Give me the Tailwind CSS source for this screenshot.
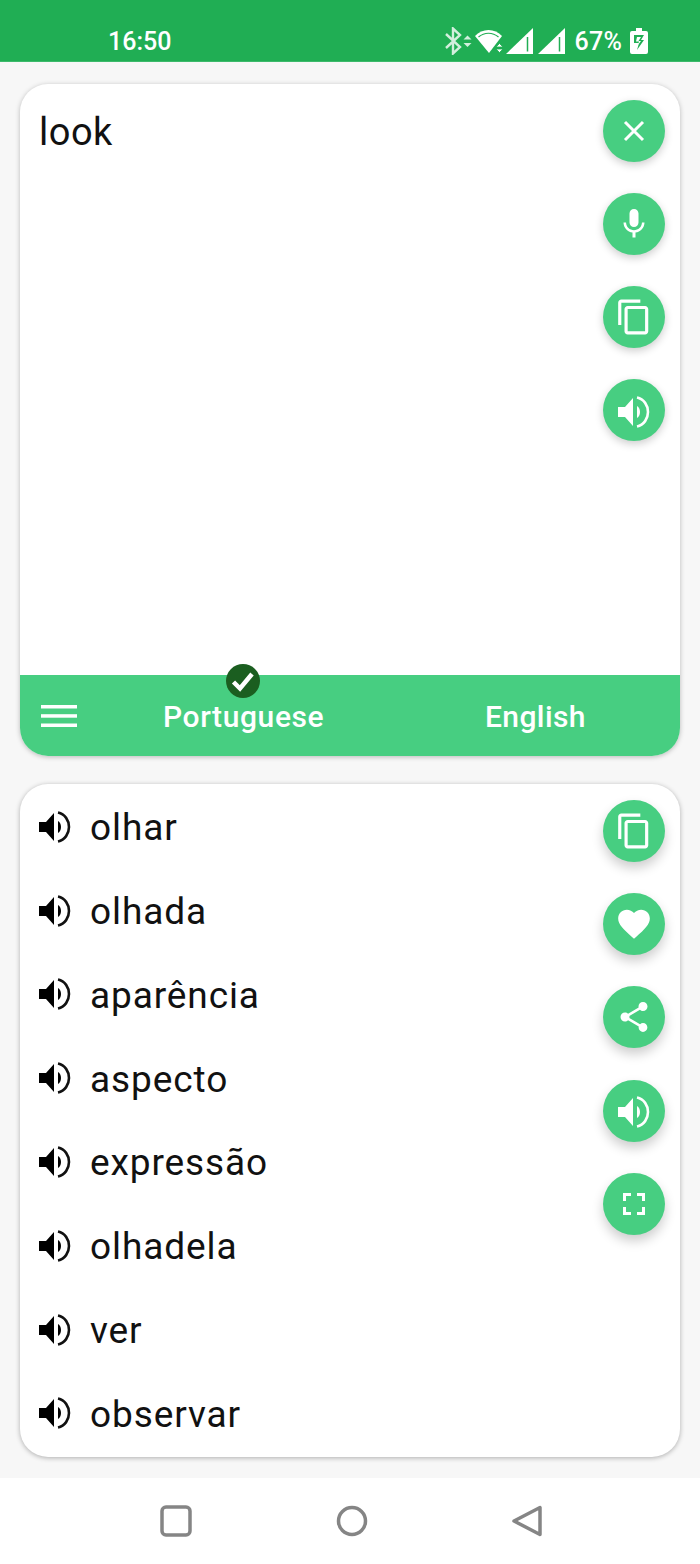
<!DOCTYPE html>
<html lang="pt">
<head>
    <meta charset="UTF-8">
    <meta name="viewport" content="width=device-width, initial-scale=1.0">
    <title>Translator</title>
    <script src="https://cdn.jsdelivr.net/npm/@tailwindcss/browser@4"></script>
</head>
<body class="bg-[#f7f7f7] font-['Roboto',sans-serif]">

<!-- Shared icons -->
<svg width="0" height="0" class="absolute">
    <symbol id="speaker" viewBox="0 0 34 34">
        <path d="M1 12h7l8-9v28l-8-9H1z"/>
        <path d="M20 11c2 1 3 3.5 3 6s-1 5-3 6z"/>
        <path d="M20 2.5c7 1.5 11 8 11 14.5s-4 13-11 14.5" fill="none" stroke="currentColor" stroke-width="2.6"/>
    </symbol>
    <symbol id="copy" viewBox="0 0 24 24">
        <path d="M16 1H4c-1.1 0-2 .9-2 2v14h2V3h12V1zm3 4H8c-1.1 0-2 .9-2 2v14c0 1.1.9 2 2 2h11c1.1 0 2-.9 2-2V7c0-1.1-.9-2-2-2zm0 16H8V7h11v14z"/>
    </symbol>
    <symbol id="signal" viewBox="0 0 27 26">
        <path d="M0 26L27 0v26z" fill="white"/>
        <path d="M21.5 9v14.5" stroke="#20ae54" stroke-width="1.5"/>
    </symbol>
</svg>

<div class="w-[700px] h-[1564px] flex flex-col overflow-hidden">

    <!-- Status bar -->
    <header class="h-[62px] bg-[#20ae54] text-white shrink-0 border-b border-b-[#3dba6b]">
        <div class="flex items-center h-[26px] mt-[28px] pl-[108px] pr-[52px] justify-between">
            <span class="text-[25px] font-medium leading-none mt-[1px]">16:50</span>
            <div class="flex items-center">
                <svg width="28" height="28" viewBox="0 0 28 28" fill="none" stroke="white" stroke-opacity="0.8" stroke-width="2.4"><path d="M2 7l14 13-7 6.5v-25L16 8 2 21"/><path d="M19.5 12.5l4-4 4 4zM19.5 16l4 4 4-4z" fill="white" fill-opacity="0.8" stroke="none"/></svg>
                <svg width="30" height="26" viewBox="0 0 30 26" class="ml-[2px]"><path d="M1 8C8 0 21 0 28 8L15 25z" fill="white"/><path d="M4.5 9c6-5 14-5 20 0" stroke="#20ae54" stroke-width="1.2" fill="none"/><path d="M22 19l3.5-3.5 3.5 3.5zM22 21l3.5 3.5 3.5-3.5z" fill="white" stroke="#20ae54" stroke-width="0.8"/></svg>
                <svg width="27" height="26" class="ml-[2px]"><use href="#signal"/></svg>
                <svg width="27" height="26" class="ml-[5px]"><use href="#signal"/></svg>
                <span class="text-[25px] font-medium leading-none ml-[10px] mt-[1px] tracking-[0.2px]">67%</span>
                <svg width="18" height="26" viewBox="0 0 18 26" class="ml-[8px]"><path d="M6 0h6v3h4a2 2 0 0 1 2 2v19a2 2 0 0 1-2 2H2a2 2 0 0 1-2-2V5a2 2 0 0 1 2-2h4z" fill="white"/><path d="M4 7h10l-3 5h3l-7 10 2-7H4z" fill="#20ae54"/><path d="M7 9h4l-2.500 4H11l-3 4 1-3.500H6z" fill="white"/></svg>
            </div>
        </div>
    </header>

    <main class="flex-1 px-[20px] pt-[22px] flex flex-col gap-[28px]">

        <!-- Input card -->
        <section class="relative h-[672px] bg-white rounded-[28px] shadow-[0_1px_5px_rgba(0,0,0,0.25)] flex flex-col">
            <div class="flex-1 pl-[19px] pt-[25px] text-[38px] leading-[46px] tracking-[0.5px] text-[#111]">look</div>

            <div class="absolute right-[15px] top-[16px] flex flex-col gap-[31px]">
                <button class="w-[62px] h-[62px] rounded-full bg-[#47ce81] shadow-[0_3px_8px_rgba(0,0,0,0.2)] flex items-center justify-center">
                    <svg width="36" height="36" viewBox="0 0 24 24" fill="none" stroke="white" stroke-width="2"><path d="M6 6l12 12M18 6L6 18"/></svg>
                </button>
                <button class="w-[62px] h-[62px] rounded-full bg-[#47ce81] shadow-[0_3px_8px_rgba(0,0,0,0.2)] flex items-center justify-center">
                    <svg width="36" height="36" viewBox="0 0 24 24" fill="white"><path d="M12 14c1.660 0 3-1.340 3-3V5c0-1.660-1.340-3-3-3S9 3.340 9 5v6c0 1.660 1.340 3 3 3zm5.300-3c0 3-2.540 5.100-5.300 5.100S6.700 14 6.700 11H5c0 3.410 2.720 6.230 6 6.720V21h2v-3.280c3.280-.49 6-3.310 6-6.720h-1.700z"/></svg>
                </button>
                <button class="w-[62px] h-[62px] rounded-full bg-[#47ce81] shadow-[0_3px_8px_rgba(0,0,0,0.2)] flex items-center justify-center">
                    <svg width="38" height="38" fill="white"><use href="#copy"/></svg>
                </button>
                <button class="w-[62px] h-[62px] rounded-full bg-[#47ce81] shadow-[0_3px_8px_rgba(0,0,0,0.2)] flex items-center justify-center text-white">
                    <svg width="34" height="34" fill="white" class="mt-[3px]"><use href="#speaker"/></svg>
                </button>
            </div>

            <!-- Language bar -->
            <div class="relative h-[81px] bg-[#47ce81] rounded-b-[28px] text-white">
                <svg width="36" height="22" viewBox="0 0 36 22" class="absolute left-[21px] top-[30px]" fill="white"><rect width="36" height="3.5"/><rect y="9.200" width="36" height="3.500"/><rect y="18.500" width="36" height="3.500"/></svg>
                <span class="absolute left-[143px] top-[22px] text-[30px] font-medium leading-[40px] tracking-[0.6px]">Portuguese</span>
                <span class="absolute left-[465px] top-[22px] text-[30px] font-medium leading-[40px] tracking-[0.4px]">English</span>
                <svg width="34" height="34" viewBox="0 0 34 34" class="absolute left-[206px] top-[-11px]"><circle cx="17" cy="17" r="17" fill="#1b5e20"/><path d="M7.500 18l6.500 6.500L26 10" fill="none" stroke="white" stroke-width="4.500"/></svg>
            </div>
        </section>

        <!-- Results card -->
        <section class="relative h-[673px] bg-white rounded-[28px] shadow-[0_1px_5px_rgba(0,0,0,0.3)]">
            <ul class="pt-[2px] pl-[18px] text-[37px] tracking-[0.9px] text-[#111]">
                <li class="h-[83.8px] flex items-center gap-[18px]"><svg width="34" height="34" class="-translate-y-[1px]"><use href="#speaker"/></svg>olhar</li>
                <li class="h-[83.8px] flex items-center gap-[18px]"><svg width="34" height="34" class="-translate-y-[1px]"><use href="#speaker"/></svg>olhada</li>
                <li class="h-[83.8px] flex items-center gap-[18px]"><svg width="34" height="34" class="-translate-y-[1px]"><use href="#speaker"/></svg>aparência</li>
                <li class="h-[83.8px] flex items-center gap-[18px]"><svg width="34" height="34" class="-translate-y-[1px]"><use href="#speaker"/></svg>aspecto</li>
                <li class="h-[83.8px] flex items-center gap-[18px]"><svg width="34" height="34" class="-translate-y-[1px]"><use href="#speaker"/></svg>expressão</li>
                <li class="h-[83.8px] flex items-center gap-[18px]"><svg width="34" height="34" class="-translate-y-[1px]"><use href="#speaker"/></svg>olhadela</li>
                <li class="h-[83.8px] flex items-center gap-[18px]"><svg width="34" height="34" class="-translate-y-[1px]"><use href="#speaker"/></svg>ver</li>
                <li class="h-[83.8px] flex items-center gap-[18px]"><svg width="34" height="34" class="-translate-y-[1px]"><use href="#speaker"/></svg>observar</li>
            </ul>

            <div class="absolute right-[15px] top-[16px] flex flex-col gap-[31.2px]">
                <button class="w-[62px] h-[62px] rounded-full bg-[#47ce81] shadow-[0_6px_12px_rgba(0,0,0,0.2)] flex items-center justify-center">
                    <svg width="38" height="38" fill="white"><use href="#copy"/></svg>
                </button>
                <button class="w-[62px] h-[62px] rounded-full bg-[#47ce81] shadow-[0_6px_12px_rgba(0,0,0,0.2)] flex items-center justify-center">
                    <svg width="38" height="38" viewBox="0 0 24 24" fill="white"><path d="M12 21.350l-1.450-1.320C5.400 15.360 2 12.280 2 8.500 2 5.420 4.420 3 7.500 3c1.740 0 3.410.81 4.500 2.090C13.090 3.810 14.760 3 16.500 3 19.580 3 22 5.420 22 8.500c0 3.780-3.400 6.860-8.550 11.540L12 21.350z"/></svg>
                </button>
                <button class="w-[62px] h-[62px] rounded-full bg-[#47ce81] shadow-[0_6px_12px_rgba(0,0,0,0.2)] flex items-center justify-center">
                    <svg width="36" height="36" viewBox="0 0 24 24" fill="white"><path d="M18 16.080c-.76 0-1.440.3-1.960.77L8.910 12.700c.05-.23.09-.46.09-.7s-.04-.47-.09-.7l7.050-4.110c.54.5 1.250.81 2.040.81 1.660 0 3-1.340 3-3s-1.340-3-3-3-3 1.340-3 3c0 .24.04.47.09.7L8.040 9.810C7.500 9.310 6.790 9 6 9c-1.660 0-3 1.340-3 3s1.340 3 3 3c.79 0 1.500-.31 2.040-.81l7.120 4.160c-.05.21-.08.43-.08.65 0 1.610 1.310 2.920 2.920 2.920s2.920-1.310 2.920-2.920-1.310-2.920-2.920-2.920z"/></svg>
                </button>
                <button class="w-[62px] h-[62px] rounded-full bg-[#47ce81] shadow-[0_6px_12px_rgba(0,0,0,0.2)] flex items-center justify-center text-white">
                    <svg width="34" height="34" fill="white" class="mt-[2px]"><use href="#speaker"/></svg>
                </button>
                <button class="w-[62px] h-[62px] rounded-full bg-[#47ce81] shadow-[0_6px_12px_rgba(0,0,0,0.2)] flex items-center justify-center">
                    <svg width="22" height="22" viewBox="0 0 22 22" fill="none" stroke="white" stroke-width="3"><path d="M1.500 8V1.500H8M14 1.500h6.500V8M20.500 14v6.500H14M8 20.500H1.500V14"/></svg>
                </button>
            </div>
        </section>
    </main>

    <!-- Nav bar -->
    <nav class="h-[86px] bg-white shrink-0 flex items-center">
        <div class="flex items-center gap-[144px] pl-[160px] -mt-[1px]">
            <svg width="32" height="32" viewBox="0 0 32 32" fill="none" stroke="#858585" stroke-width="3.5"><rect x="2" y="2" width="28" height="28" rx="4"/></svg>
            <svg width="32" height="32" viewBox="0 0 32 32" fill="none" stroke="#858585" stroke-width="3.5"><circle cx="16" cy="16" r="13.500"/></svg>
            <svg width="32" height="32" viewBox="0 0 32 32" fill="none" stroke="#858585" stroke-width="3.5" stroke-linejoin="round"><path d="M28 2.500v27L2 16z"/></svg>
        </div>
    </nav>
</div>
</body>
</html>
